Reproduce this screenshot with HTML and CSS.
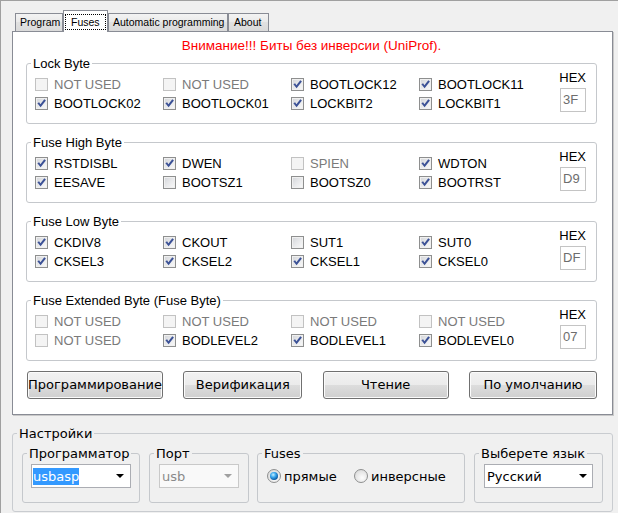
FILE: index.html
```html
<!DOCTYPE html>
<html>
<head>
<meta charset="utf-8">
<link rel="stylesheet" href="styles.css">
</head>
<body>
<div class="window">
  <div class="tabs">
    <div class="tab t-program">Program</div>
    <div class="tab t-fuses active"><span class="focus">Fuses</span></div>
    <div class="tab t-auto">Automatic programming</div>
    <div class="tab t-about">About</div>
  </div>
  <div class="panel">
    <div class="warning">Внимание!!! Биты без инверсии (UniProf).</div>

    <fieldset class="group">
      <legend>Lock Byte</legend>
      <div class="gbody">
        <div class="bits">
          <div class="cb disabled"><span class="box"></span>NOT USED</div>
          <div class="cb disabled"><span class="box"></span>NOT USED</div>
          <div class="cb"><span class="box"><svg viewBox="0 0 11 11"><polygon points="1.4,5.3 3.1,4.2 4.4,6.3 8.3,1.2 9.9,2.4 4.6,9.3"/></svg></span>BOOTLOCK12</div>
          <div class="cb"><span class="box"><svg viewBox="0 0 11 11"><polygon points="1.4,5.3 3.1,4.2 4.4,6.3 8.3,1.2 9.9,2.4 4.6,9.3"/></svg></span>BOOTLOCK11</div>
          <div class="cb"><span class="box"><svg viewBox="0 0 11 11"><polygon points="1.4,5.3 3.1,4.2 4.4,6.3 8.3,1.2 9.9,2.4 4.6,9.3"/></svg></span>BOOTLOCK02</div>
          <div class="cb"><span class="box"><svg viewBox="0 0 11 11"><polygon points="1.4,5.3 3.1,4.2 4.4,6.3 8.3,1.2 9.9,2.4 4.6,9.3"/></svg></span>BOOTLOCK01</div>
          <div class="cb"><span class="box"><svg viewBox="0 0 11 11"><polygon points="1.4,5.3 3.1,4.2 4.4,6.3 8.3,1.2 9.9,2.4 4.6,9.3"/></svg></span>LOCKBIT2</div>
          <div class="cb"><span class="box"><svg viewBox="0 0 11 11"><polygon points="1.4,5.3 3.1,4.2 4.4,6.3 8.3,1.2 9.9,2.4 4.6,9.3"/></svg></span>LOCKBIT1</div>
        </div>
        <div class="hex"><div class="hex-label">HEX</div><div class="hex-box">3F</div></div>
      </div>
    </fieldset>

    <fieldset class="group">
      <legend>Fuse High Byte</legend>
      <div class="gbody">
        <div class="bits">
          <div class="cb"><span class="box"><svg viewBox="0 0 11 11"><polygon points="1.4,5.3 3.1,4.2 4.4,6.3 8.3,1.2 9.9,2.4 4.6,9.3"/></svg></span>RSTDISBL</div>
          <div class="cb"><span class="box"><svg viewBox="0 0 11 11"><polygon points="1.4,5.3 3.1,4.2 4.4,6.3 8.3,1.2 9.9,2.4 4.6,9.3"/></svg></span>DWEN</div>
          <div class="cb disabled"><span class="box"></span>SPIEN</div>
          <div class="cb"><span class="box"><svg viewBox="0 0 11 11"><polygon points="1.4,5.3 3.1,4.2 4.4,6.3 8.3,1.2 9.9,2.4 4.6,9.3"/></svg></span>WDTON</div>
          <div class="cb"><span class="box"><svg viewBox="0 0 11 11"><polygon points="1.4,5.3 3.1,4.2 4.4,6.3 8.3,1.2 9.9,2.4 4.6,9.3"/></svg></span>EESAVE</div>
          <div class="cb"><span class="box"></span>BOOTSZ1</div>
          <div class="cb"><span class="box"></span>BOOTSZ0</div>
          <div class="cb"><span class="box"><svg viewBox="0 0 11 11"><polygon points="1.4,5.3 3.1,4.2 4.4,6.3 8.3,1.2 9.9,2.4 4.6,9.3"/></svg></span>BOOTRST</div>
        </div>
        <div class="hex"><div class="hex-label">HEX</div><div class="hex-box">D9</div></div>
      </div>
    </fieldset>

    <fieldset class="group">
      <legend>Fuse Low Byte</legend>
      <div class="gbody">
        <div class="bits">
          <div class="cb"><span class="box"><svg viewBox="0 0 11 11"><polygon points="1.4,5.3 3.1,4.2 4.4,6.3 8.3,1.2 9.9,2.4 4.6,9.3"/></svg></span>CKDIV8</div>
          <div class="cb"><span class="box"><svg viewBox="0 0 11 11"><polygon points="1.4,5.3 3.1,4.2 4.4,6.3 8.3,1.2 9.9,2.4 4.6,9.3"/></svg></span>CKOUT</div>
          <div class="cb"><span class="box"></span>SUT1</div>
          <div class="cb"><span class="box"><svg viewBox="0 0 11 11"><polygon points="1.4,5.3 3.1,4.2 4.4,6.3 8.3,1.2 9.9,2.4 4.6,9.3"/></svg></span>SUT0</div>
          <div class="cb"><span class="box"><svg viewBox="0 0 11 11"><polygon points="1.4,5.3 3.1,4.2 4.4,6.3 8.3,1.2 9.9,2.4 4.6,9.3"/></svg></span>CKSEL3</div>
          <div class="cb"><span class="box"><svg viewBox="0 0 11 11"><polygon points="1.4,5.3 3.1,4.2 4.4,6.3 8.3,1.2 9.9,2.4 4.6,9.3"/></svg></span>CKSEL2</div>
          <div class="cb"><span class="box"><svg viewBox="0 0 11 11"><polygon points="1.4,5.3 3.1,4.2 4.4,6.3 8.3,1.2 9.9,2.4 4.6,9.3"/></svg></span>CKSEL1</div>
          <div class="cb"><span class="box"><svg viewBox="0 0 11 11"><polygon points="1.4,5.3 3.1,4.2 4.4,6.3 8.3,1.2 9.9,2.4 4.6,9.3"/></svg></span>CKSEL0</div>
        </div>
        <div class="hex"><div class="hex-label">HEX</div><div class="hex-box">DF</div></div>
      </div>
    </fieldset>

    <fieldset class="group">
      <legend>Fuse Extended Byte (Fuse Byte)</legend>
      <div class="gbody">
        <div class="bits">
          <div class="cb disabled"><span class="box"></span>NOT USED</div>
          <div class="cb disabled"><span class="box"></span>NOT USED</div>
          <div class="cb disabled"><span class="box"></span>NOT USED</div>
          <div class="cb disabled"><span class="box"></span>NOT USED</div>
          <div class="cb disabled"><span class="box"></span>NOT USED</div>
          <div class="cb"><span class="box"><svg viewBox="0 0 11 11"><polygon points="1.4,5.3 3.1,4.2 4.4,6.3 8.3,1.2 9.9,2.4 4.6,9.3"/></svg></span>BODLEVEL2</div>
          <div class="cb"><span class="box"><svg viewBox="0 0 11 11"><polygon points="1.4,5.3 3.1,4.2 4.4,6.3 8.3,1.2 9.9,2.4 4.6,9.3"/></svg></span>BODLEVEL1</div>
          <div class="cb"><span class="box"><svg viewBox="0 0 11 11"><polygon points="1.4,5.3 3.1,4.2 4.4,6.3 8.3,1.2 9.9,2.4 4.6,9.3"/></svg></span>BODLEVEL0</div>
        </div>
        <div class="hex"><div class="hex-label">HEX</div><div class="hex-box">07</div></div>
      </div>
    </fieldset>

    <div class="buttons">
      <div class="btn b1">Программирование</div>
      <div class="btn b2">Верификация</div>
      <div class="btn b3">Чтение</div>
      <div class="btn b4">По умолчанию</div>
    </div>
  </div>

  <fieldset class="settings">
    <legend>Настройки</legend>
    <div class="settings-body">
      <fieldset class="sub s-prog">
        <legend>Программатор</legend>
        <div class="sub-body">
          <div class="combo c-prog"><span class="val"><span class="sel">usbasp</span></span><span class="arrow"></span></div>
        </div>
      </fieldset>
      <fieldset class="sub s-port">
        <legend>Порт</legend>
        <div class="sub-body">
          <div class="combo c-port disabled"><span class="val">usb</span><span class="arrow"></span></div>
        </div>
      </fieldset>
      <fieldset class="sub s-fuses">
        <legend>Fuses</legend>
        <div class="sub-body">
          <div class="radio-item r1"><span class="radio on"><span class="dot"></span></span>прямые</div>
          <div class="radio-item r2"><span class="radio"></span>инверсные</div>
        </div>
      </fieldset>
      <fieldset class="sub s-lang">
        <legend>Выберете язык</legend>
        <div class="sub-body">
          <div class="combo c-lang"><span class="val">Русский</span><span class="arrow"></span></div>
        </div>
      </fieldset>
    </div>
  </fieldset>
</div>
</body>
</html>
```
FILE: styles.css
```css
html, body {
  margin: 0;
  padding: 0;
}
body {
  width: 618px;
  height: 513px;
  overflow: hidden;
  background: #f0f0f0;
  font-family: "Liberation Sans", Arial, sans-serif;
  color: #000;
}
.window {
  box-sizing: border-box;
  height: 513px;
  border-top: 1px solid #a0a0a0;
  border-left: 1px solid #a0a0a0;
  padding: 10px 0 0 11px;
}

/* tabs */
.tabs {
  display: flex;
  align-items: flex-end;
  height: 20px;
  padding-left: 3px;
  position: relative;
  z-index: 1;
}
.tab {
  box-sizing: border-box;
  height: 18px;
  border: 1px solid #898c95;
  border-bottom: none;
  background: linear-gradient(#f3f3f3, #e9e9e9 50%, #e1e1e1 50%, #dadada);
  font-size: 10.5px;
  line-height: 17px;
  padding-left: 4px;
  white-space: nowrap;
  overflow: hidden;
}
.t-program { width: 48px; }
.t-fuses { width: 45px; }
.t-auto { width: 120px; padding-left: 4px; }
.t-about { width: 41px; padding-left: 5px; }
.tab.active {
  height: 22px;
  margin-bottom: -1px;
  background: #fff;
  padding: 3px 1px 0 1px;
  line-height: 12px;
}
.focus {
  display: block;
  box-sizing: border-box;
  height: 16px;
  border: 1px dotted #000;
  padding-left: 5px;
  padding-top: 1px;
}

/* panel */
.panel {
  box-sizing: border-box;
  width: 601px;
  height: 384px;
  border: 1px solid #898c95;
  box-shadow: 1px 1px 0 #c9c9c9;
  background: #fff;
  padding: 6px 15px 0 13px;
}
.warning {
  color: #ff0000;
  font-size: 13.5px;
  line-height: 16px;
  height: 16px;
  text-align: center;
  white-space: nowrap;
  margin-bottom: 2px;
}
fieldset {
  margin: 0;
  padding: 0;
  min-width: 0;
  border: 1px solid #c5c8cc;
  border-radius: 3px;
}
legend {
  padding: 0 2px;
  margin-left: 4px;
  line-height: 15px;
  font-size: 13px;
}
.group {
  margin-bottom: 11px;
}
.gbody {
  display: flex;
  height: 38px;
  padding: 4px 10px 10px 8px;
}
.bits {
  display: grid;
  grid-template-columns: repeat(4, 128px);
  grid-auto-rows: 19px;
}
.cb {
  display: flex;
  align-items: center;
  font-size: 13px;
  white-space: nowrap;
}
.box {
  box-sizing: border-box;
  width: 13px;
  height: 13px;
  margin-right: 6px;
  border: 1px solid #8e8f8f;
  background: linear-gradient(135deg, #d2d4d8 0%, #e8e9eb 50%, #fafafa 100%);
  box-shadow: inset 0 0 0 1px #f0f0f0;
  display: flex;
}
.box svg {
  width: 11px;
  height: 11px;
  fill: #3b5196;
}
.cb.disabled {
  color: #7a7a7a;
}
.cb.disabled .box {
  border-color: #c2c2c2;
  background: #f4f4f4;
  box-shadow: none;
}
.hex {
  margin-left: auto;
  margin-top: -5px;
  display: flex;
  flex-direction: column;
  align-items: flex-end;
}
.hex-label {
  font-size: 13px;
  line-height: 15px;
}
.hex-box {
  box-sizing: border-box;
  width: 26px;
  height: 24px;
  margin-top: 3px;
  border: 1px solid #c4c4c4;
  background: #fff;
  color: #6d6d6d;
  font-size: 13px;
  line-height: 22px;
  padding-left: 2px;
}

/* buttons */
.buttons {
  display: flex;
  justify-content: space-between;
  margin: -1px 0 0 1px;
}
.btn {
  box-sizing: border-box;
  height: 28px;
  border: 1px solid #707070;
  border-radius: 3px;
  background: linear-gradient(#f2f2f2 0%, #ebebeb 50%, #dddddd 50%, #cfcfcf 100%);
  box-shadow: inset 0 0 0 1px #fbfbfb;
  font-family: "DejaVu Sans", sans-serif;
  font-size: 13px;
  line-height: 26px;
  text-align: center;
  white-space: nowrap;
}
.b1 { width: 136px; }
.b2 { width: 119px; }
.b3 { width: 126px; }
.b4 { width: 128px; }

/* settings */
.settings {
  width: 601px;
  box-sizing: border-box;
  height: 86px;
  margin-top: 11px;
  border-color: #c9ccd0;
  font-family: "DejaVu Sans", sans-serif;
}
.settings legend {
  font-size: 13px;
}
.settings-body {
  display: flex;
  padding: 5px 9px 0 9px;
}
.sub {
  box-sizing: border-box;
  height: 57px;
}
.s-prog { width: 118px; margin-right: 9px; }
.s-port { width: 100px; margin-right: 8px; }
.s-fuses { width: 208px; margin-right: 9px; }
.s-lang { width: 129px; }
.sub-body {
  display: flex;
  align-items: center;
  height: 24px;
  padding-top: 3px;
}
.s-prog .sub-body { padding-left: 8px; }
.s-port .sub-body { padding-left: 9px; }
.s-fuses .sub-body { padding-left: 9px; }
.s-lang .sub-body { padding-left: 9px; }

.combo {
  box-sizing: border-box;
  height: 24px;
  border: 1px solid #abadb3;
  background: #fff;
  display: flex;
  align-items: center;
  padding-left: 1px;
  font-size: 13px;
}
.combo .val {
  flex: 1;
  white-space: nowrap;
}
.sel {
  display: inline-block;
  background: #3399ff;
  color: #fff;
  line-height: 17px;
}
.arrow {
  width: 0;
  height: 0;
  border-left: 4px solid transparent;
  border-right: 4px solid transparent;
  border-top: 4px solid #000;
  margin-right: 6px;
}
.c-prog { width: 100px; }
.c-port { width: 80px; padding-left: 2px; }
.c-lang { width: 109px; padding-left: 2px; }
.c-lang .arrow { margin-right: 5px; }
.combo.disabled {
  border-color: #c9c9c9;
  background: #f9f9f9;
  color: #8a8a8a;
}
.combo.disabled .arrow {
  border-top-color: #a0a0a0;
}

.radio-item {
  display: flex;
  align-items: center;
  font-size: 13px;
  white-space: nowrap;
}
.r1 { width: 87px; }
.radio {
  box-sizing: border-box;
  width: 14px;
  height: 14px;
  border-radius: 50%;
  border: 1px solid #8e8f8f;
  background: radial-gradient(circle at 60% 65%, #fdfdfd 0%, #e4e4e4 60%, #d0d0d0 100%);
  margin-right: 3px;
  display: flex;
  align-items: center;
  justify-content: center;
}
.dot {
  width: 8px;
  height: 8px;
  border-radius: 50%;
  background: radial-gradient(circle at 40% 35%, #c8f0ff 0%, #3aa8ee 35%, #0d5ea8 70%, #08386d 100%);
}
```
